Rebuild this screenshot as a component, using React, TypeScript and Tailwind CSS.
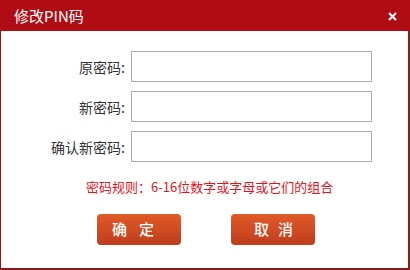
import React from "react";

const font = { fontFamily: '"Noto Sans CJK SC", "Noto Sans", sans-serif' };

function Row({ label }: { label: string }) {
  return (
    <div className="flex items-center">
      <div className="w-[124px] text-right text-[14px] leading-[20px] text-[#333333]">{label}</div>
      <div className="ml-[6px] h-[31px] w-[241px] border border-[#acacac] bg-white" />
    </div>
  );
}

export default function App() {
  return (
    <div className="flex h-[270px] w-[410px] flex-col bg-white" style={font}>
      <div className="flex h-[31px] items-center justify-between bg-[#b00c13] pl-[14px] pr-[13px]">
        <span className="text-[15px] leading-[20px] text-white">修改PIN码</span>
        <svg width="9" height="9" viewBox="0 0 9 9" className="mt-[1px]">
          <path d="M1 1 L8 8 M8 1 L1 8" stroke="white" strokeWidth="2" />
        </svg>
      </div>
      <div className="flex flex-1 flex-col border-b-2 border-l border-r-2 border-[#8b1b1b] pt-[20px]">
        <div className="flex flex-col gap-[9px]">
          <Row label="原密码:" />
          <Row label="新密码:" />
          <Row label="确认新密码:" />
        </div>
        <div className="mt-[15px] pl-[85px] text-[13px] leading-[20px] text-[#e3141b]">
          密码规则：6-16位数字或字母或它们的组合
        </div>
        <div className="mt-[17px] flex gap-[50px] pl-[96px]">
          <div className="flex h-[31px] w-[84px] items-center gap-[12px] rounded-[4px] bg-gradient-to-b from-[#e05b28] to-[#bf3c1d] pl-[15px] text-[15px] font-medium text-white">
            <span>确</span>
            <span>定</span>
          </div>
          <div className="flex h-[31px] w-[84px] items-center gap-[9px] rounded-[4px] bg-gradient-to-b from-[#e05b28] to-[#bf3c1d] pl-[23px] text-[15px] font-medium text-white">
            <span>取</span>
            <span>消</span>
          </div>
        </div>
      </div>
    </div>
  );
}
